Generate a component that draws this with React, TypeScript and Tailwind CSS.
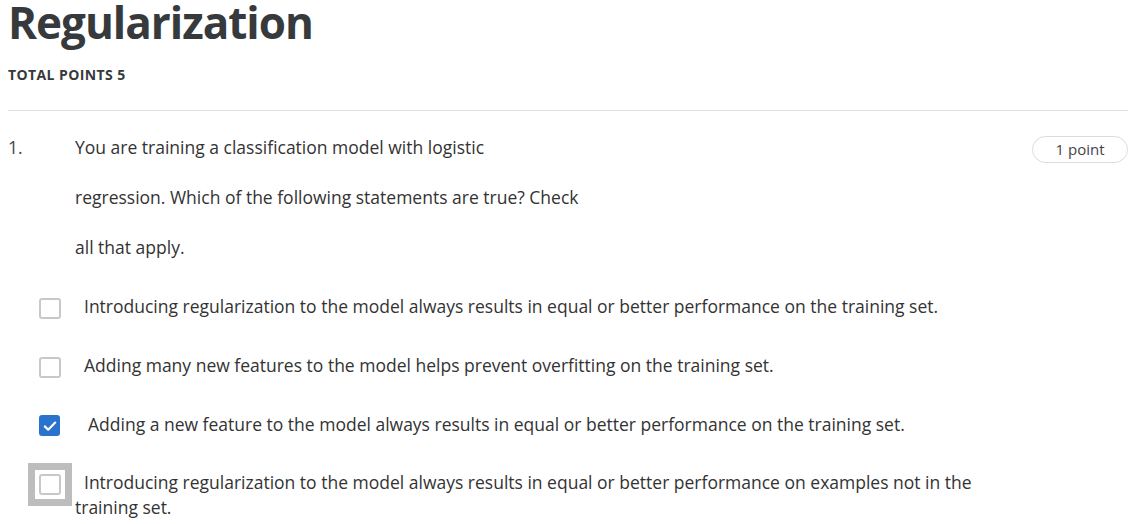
import { useState } from "react";

type Option = {
  text: string;
  checked: boolean;
  focused?: boolean;
  extraGap?: boolean;
};

const options: Option[] = [
  { text: "Introducing regularization to the model always results in equal or better performance on the training set.", checked: false },
  { text: "Adding many new features to the model helps prevent overfitting on the training set.", checked: false },
  { text: "Adding a new feature to the model always results in equal or better performance on the training set.", checked: true, extraGap: true },
  { text: "Introducing regularization to the model always results in equal or better performance on examples not in the training set.", checked: false, focused: true },
];

const questionLines = [
  "You are training a classification model with logistic",
  "regression. Which of the following statements are true? Check",
  "all that apply.",
];

function CheckBox({ checked, focused }: { checked: boolean; focused?: boolean }) {
  if (checked) {
    return (
      <span className="inline-flex items-center justify-center align-middle w-[21px] h-[21px] rounded-[3px] bg-[#2a73cc]">
        <svg width="16" height="16" viewBox="0 0 16 16" fill="none">
          <path d="M2.8 8.4l3.4 3.3L13.2 4.6" stroke="#fff" strokeWidth="2.2" strokeLinecap="round" strokeLinejoin="round" />
        </svg>
      </span>
    );
  }
  return (
    <span className="relative inline-block align-middle w-[22px] h-[21px] rounded-[3px] border-2 border-[#c8c8c8] bg-white">
      {focused && <span className="absolute -inset-[13px] border-[7px] border-[#bdbdbd]" />}
    </span>
  );
}

export default function App() {
  const [answers] = useState(options);

  return (
    <div className="min-h-[524px] bg-white pl-2 pr-1 font-['Open_Sans',sans-serif] text-[#333]">
      <h1 className="text-[44px] leading-[45px] tracking-[-1px] font-bold text-[#373a3c]">Regularization</h1>
      <div className="mt-5 text-[14px] leading-5 tracking-[0.4px] font-bold text-[#373a3c]">TOTAL POINTS 5</div>
      <div className="mt-[25px] border-t border-[#e1e1e1]" />

      <div className="flex items-start mt-[11px]">
        <div className="w-[67px] text-[17.5px] leading-[50px] text-[#444]">1.</div>
        <div className="flex-1 text-[17.5px] leading-[50px]">
          {questionLines.map(line => (
            <p key={line}>{line}</p>
          ))}
        </div>
        <div className="mt-[14px] flex items-center justify-center w-[96px] h-[27px] rounded-full border border-[#dcdcdc] text-[15px] text-[#444]">
          1 point
        </div>
      </div>

      <div className="mt-[22px] pl-[67px] space-y-[34px] text-[17.5px] leading-6">
        {answers.map((o, i) => (
          <p key={i} className="max-w-[925px]">
            <span className={`inline-block ml-[-36px] ${o.extraGap ? "mr-[28px]" : "mr-[23px]"}`}>
              <CheckBox checked={o.checked} focused={o.focused} />
            </span>
            {o.text}
          </p>
        ))}
      </div>
    </div>
  );
}
